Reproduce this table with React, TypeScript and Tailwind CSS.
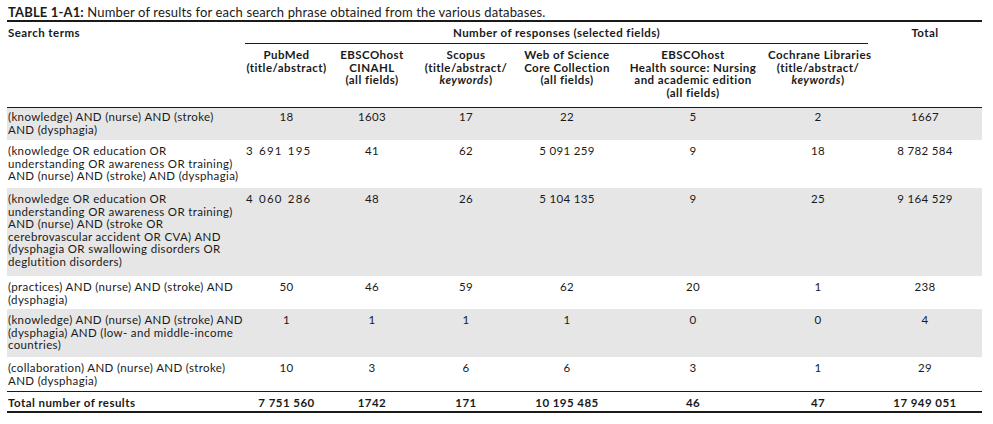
import React from "react";

interface Row {
    lines: string[];
    values: string[];
    total: string;
    shaded: boolean;
    height: string;
    pad: string;
    offset?: boolean;
}

const rows: Row[] = [
    { lines: ["(knowledge) AND (nurse) AND (stroke)", "AND (dysphagia)"], values: ["18", "1603", "17", "22", "5", "2"], total: "1667", shaded: true, height: "h-[32px]", pad: "pt-[3px]" },
    { lines: ["(knowledge OR education OR", "understanding OR awareness OR training)", "AND (nurse) AND (stroke) AND (dysphagia)"], values: ["3 691 195", "41", "62", "5 091 259", "9", "18"], total: "8 782 584", shaded: false, height: "h-[48px]", pad: "pt-[5px]", offset: true },
    { lines: ["(knowledge OR education OR", "understanding OR awareness OR training)", "AND (nurse) AND (stroke OR", "cerebrovascular accident OR CVA) AND", "(dysphagia OR swallowing disorders OR", "deglutition disorders)"], values: ["4 060 286", "48", "26", "5 104 135", "9", "25"], total: "9 164 529", shaded: true, height: "h-[88px]", pad: "pt-[5px]", offset: true },
    { lines: ["(practices) AND (nurse) AND (stroke) AND", "(dysphagia)"], values: ["50", "46", "59", "62", "20", "1"], total: "238", shaded: false, height: "h-[33px]", pad: "pt-[5px]" },
    { lines: ["(knowledge) AND (nurse) AND (stroke) AND", "(dysphagia) AND (low- and middle-income", "countries)"], values: ["1", "1", "1", "1", "0", "0"], total: "4", shaded: true, height: "h-[48px]", pad: "pt-[5px]" },
    { lines: ["(collaboration) AND (nurse) AND (stroke)", "AND (dysphagia)"], values: ["10", "3", "6", "6", "3", "1"], total: "29", shaded: false, height: "h-[34px]", pad: "pt-[5px]" },
];

const totals = ["7 751 560", "1742", "171", "10 195 485", "46", "47"];

const cols = "grid grid-cols-[238px_83px_88px_100px_102px_150px_100px_114px]";

export default function App() {
    return (
        <div className="w-[993px] h-[424px] bg-white text-[#1a1a1a] pl-[7px] pt-[5px]" style={{ fontFamily: "Lato, 'Open Sans', sans-serif" }}>
            <p className="h-[15px] text-[13px] leading-[14px] tracking-[0.15px] pl-[1px]">
                <span className="font-bold">TABLE 1-A1:</span> Number of results for each search phrase obtained from the various databases.
            </p>
            <div className="w-[975px] text-[11.5px] leading-[12.5px] tracking-[0.35px]">
                <div className="h-[2px] bg-[#1a1a1a]" />

                {/* header */}
                <div className={`${cols} h-[85px] font-bold tracking-[0.45px] whitespace-nowrap`}>
                    <div className="pt-[5px] pl-[1px]">Search terms</div>
                    <div className="col-span-6 flex flex-col">
                        <div className="pt-[5px] pb-[3px] h-[22px] text-center border-b border-[#1a1a1a]">Number of responses (selected fields)</div>
                        <div className="grid grid-cols-[83px_88px_100px_102px_150px_100px] pt-[5px] text-center">
                            <div>PubMed<br />(title/abstract)</div>
                            <div>EBSCOhost<br />CINAHL<br />(all fields)</div>
                            <div>Scopus<br />(title/abstract/<br /><i>keywords</i>)</div>
                            <div>Web of Science<br />Core Collection<br />(all fields)</div>
                            <div>EBSCOhost<br />Health source: Nursing<br />and academic edition<br />(all fields)</div>
                            <div>Cochrane Libraries<br />(title/abstract/<br /><i>keywords</i>)</div>
                        </div>
                    </div>
                    <div className="pt-[5px] text-center">Total</div>
                </div>
                <div className="h-px bg-[#1a1a1a]" />

                {rows.map((row, i) => (
                    <div key={i} className={`${cols} ${row.height} ${row.pad} ${row.shaded ? "bg-[#e6e6e6]" : "bg-white"}`}>
                        <div className="pl-[1px]">
                            {row.lines.map((l, k) => (
                                <div key={k} className="whitespace-nowrap">{l}</div>
                            ))}
                        </div>
                        {row.values.map((v, j) => (
                            <div key={j} className={j === 0 && row.offset ? "text-left pl-px tracking-[1.2px] [word-spacing:1px]" : "text-center"}>{v}</div>
                        ))}
                        <div className="text-center">{row.total}</div>
                    </div>
                ))}

                <div className="h-px bg-[#1a1a1a]" />
                <div className={`${cols} h-[19px] pt-[5px] font-bold tracking-[0.45px]`}>
                    <div className="pl-[1px]">Total number of results</div>
                    {totals.map((v, j) => (
                        <div key={j} className="text-center">{v}</div>
                    ))}
                    <div className="text-center">17 949 051</div>
                </div>
                <div className="h-[2px] bg-[#1a1a1a]" />
            </div>
        </div>
    );
}
